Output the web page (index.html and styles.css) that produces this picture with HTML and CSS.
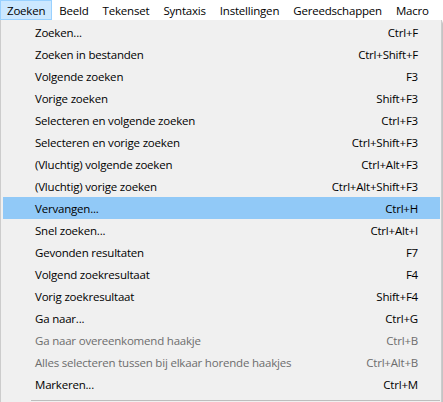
FILE: index.html
```html
<!DOCTYPE html>
<html>
<head>
<meta charset="utf-8">
<link rel="stylesheet" href="styles.css">
</head>
<body>
<div class="app">
  <div class="menubar">
    <span class="mb-item active">Zoeken</span>
    <span class="mb-item">Beeld</span>
    <span class="mb-item">Tekenset</span>
    <span class="mb-item">Syntaxis</span>
    <span class="mb-item">Instellingen</span>
    <span class="mb-item">Gereedschappen</span>
    <span class="mb-item">Macro</span>
  </div>
  <div class="dropdown">
    <div class="item"><span>Zoeken...</span><span>Ctrl+F</span></div>
    <div class="item"><span>Zoeken in bestanden</span><span>Ctrl+Shift+F</span></div>
    <div class="item"><span>Volgende zoeken</span><span>F3</span></div>
    <div class="item"><span>Vorige zoeken</span><span>Shift+F3</span></div>
    <div class="item"><span>Selecteren en volgende zoeken</span><span>Ctrl+F3</span></div>
    <div class="item"><span>Selecteren en vorige zoeken</span><span>Ctrl+Shift+F3</span></div>
    <div class="item"><span>(Vluchtig) volgende zoeken</span><span>Ctrl+Alt+F3</span></div>
    <div class="item"><span>(Vluchtig) vorige zoeken</span><span>Ctrl+Alt+Shift+F3</span></div>
    <div class="item selected"><span>Vervangen...</span><span>Ctrl+H</span></div>
    <div class="item"><span>Snel zoeken...</span><span>Ctrl+Alt+I</span></div>
    <div class="item"><span>Gevonden resultaten</span><span>F7</span></div>
    <div class="item"><span>Volgend zoekresultaat</span><span>F4</span></div>
    <div class="item"><span>Vorig zoekresultaat</span><span>Shift+F4</span></div>
    <div class="item"><span>Ga naar...</span><span>Ctrl+G</span></div>
    <div class="item disabled"><span>Ga naar overeenkomend haakje</span><span>Ctrl+B</span></div>
    <div class="item disabled"><span>Alles selecteren tussen bij elkaar horende haakjes</span><span>Ctrl+Alt+B</span></div>
    <div class="item"><span>Markeren...</span><span>Ctrl+M</span></div>
    <div class="separator"></div>
  </div>
</div>
</body>
</html>
```
FILE: styles.css
```css
html, body {
  margin: 0;
  padding: 0;
}
body {
  width: 443px;
  height: 402px;
  overflow: hidden;
  background: #ffffff;
  font-family: "Open Sans", "Noto Sans", sans-serif;
  font-size: 11.5px;
  letter-spacing: -0.2px;
  color: #000;
}
.app {
  display: flex;
  flex-direction: column;
}
.menubar {
  display: flex;
  height: 20px;
  background: #ffffff;
}
.mb-item {
  display: flex;
  align-items: center;
  padding: 0 6px;
  border: 1px solid transparent;
  height: 18px;
}
.mb-item.active {
  background: #cce8ff;
  border-color: #99d1ff;
}
.dropdown {
  width: 437px;
  background: #f0f0f0;
  border: 1px solid #cccccc;
  border-top: none;
  padding: 1px 1px 2px 2px;
  box-shadow: 2px 2px 2px rgba(0,0,0,0.25);
}
.item {
  display: flex;
  justify-content: space-between;
  align-items: center;
  height: 22px;
  padding: 0 22px 0 32px;
}
.item.selected {
  background: #91c9f7;
}
.item.disabled {
  color: #6d6d6d;
}
.separator {
  height: 1px;
  background: #bdbdbd;
  margin: 5px 0 0 28px;
}
```
